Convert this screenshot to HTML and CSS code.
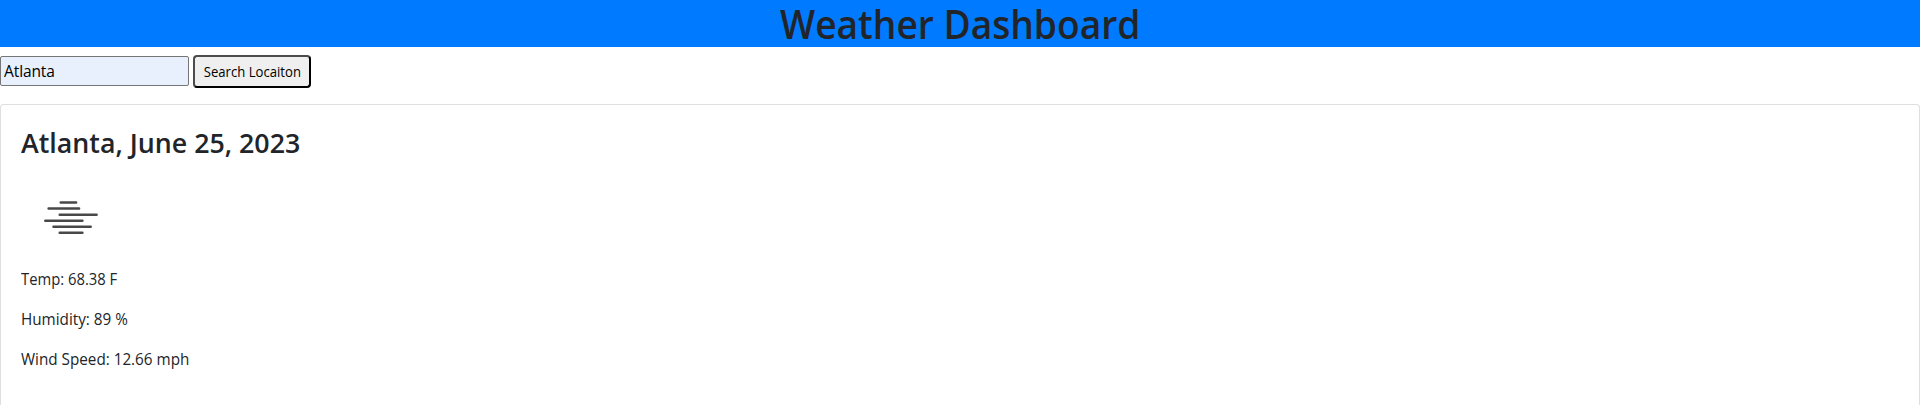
FILE: index.html
```html
<!DOCTYPE html>
<html lang="en">
<head>
<meta charset="utf-8">
<title>Weather Dashboard</title>
<link rel="stylesheet" href="styles.css">
</head>
<body>
<header class="header"><h1 class="header-title"><span class="header-text">Weather Dashboard</span></h1></header>
<form class="search">
<input class="search-input" type="text" value="Atlanta" aria-label="Location">
<button class="search-button" type="button"><span class="search-label">Search Locaiton</span></button>
</form>
<main class="card">
<h3 class="card-title"><span class="card-title-text">Atlanta, June 25, 2023</span></h3>
<svg class="weather-icon" viewBox="0 0 100 100" role="img" aria-label="Mist">
<path d="M39.7 34.4H55.1M27.6 40.5H58.1M38.7 46.7H75.6M24.3 52.7H61.4M32.5 58.7H69.7M38.7 64.7H61.4"/>
</svg>
<p class="reading"><span class="reading-text reading-temp">Temp: 68.38 F</span></p>
<p class="reading"><span class="reading-text">Humidity: 89 %</span></p>
<p class="reading"><span class="reading-text">Wind Speed: 12.66 mph</span></p>
</main>
</body>
</html>
```
FILE: styles.css
```css
* { box-sizing: border-box; }
body {
  margin: 0;
  height: 405px;
  display: flex;
  flex-direction: column;
  background: #fff;
  color: #212529;
  font: 400 16px/24px "Segoe UI", "Open Sans", "Noto Sans", sans-serif;
}
.header {
  flex: none;
  height: 47px;
  background: #007bff;
  text-align: center;
}
.header-title {
  margin: 0;
  font-size: 39px;
  font-weight: 600;
  line-height: 47px;
  height: 47px;
}
.header-text {
  display: inline-block;
  line-height: 46px;
  transform: scaleX(0.952);
}
.search {
  flex: none;
  height: 57px;
  margin: 0;
  padding-top: 8px;
  display: flex;
  align-items: flex-start;
  gap: 4px;
}
.search-input {
  width: 189px;
  height: 30px;
  margin-top: 1px;
  padding: 1px 2px 1px 3px;
  border: 1px solid #767676;
  border-radius: 2px;
  background: #e8f0fe;
  color: #000;
  font: inherit;
  font-size: 15.5px;
  letter-spacing: -0.1px;
}
.search-button {
  width: 118px;
  height: 33px;
  padding: 0;
  border: 2px solid #000;
  border-color: #4c4c4c #000 #000 #4c4c4c;
  border-radius: 4px;
  background: #efefef;
  color: #000;
  font: 400 13.6px/24px "Segoe UI", "Open Sans", "Noto Sans", sans-serif;
  white-space: nowrap;
}
.search-label {
  display: inline-block;
  transform: scaleX(0.965);
}
.card {
  flex: 1;
  min-height: 0;
  padding: 20px 20px 0;
  border: 1px solid #dfdfdf;
  border-bottom: 0;
  border-radius: 4px 4px 0 0;
}
.card-title {
  margin: 0;
  height: 43px;
  padding-top: 1px;
  font-size: 27.5px;
  font-weight: 600;
  line-height: 34px;
}
.card-title-text {
  display: inline-block;
  transform: scaleX(0.974);
  transform-origin: left;
}
.weather-icon {
  display: block;
  width: 100px;
  height: 100px;
  margin-bottom: -1px;
  fill: none;
  stroke: #484848;
  stroke-width: 2.5;
  stroke-linecap: round;
}
.reading { margin: 0 0 16px; }
.reading-text {
  display: inline-block;
  transform: scaleX(0.953);
  transform-origin: left;
}
.reading-temp { transform: scaleX(0.925); }
```
